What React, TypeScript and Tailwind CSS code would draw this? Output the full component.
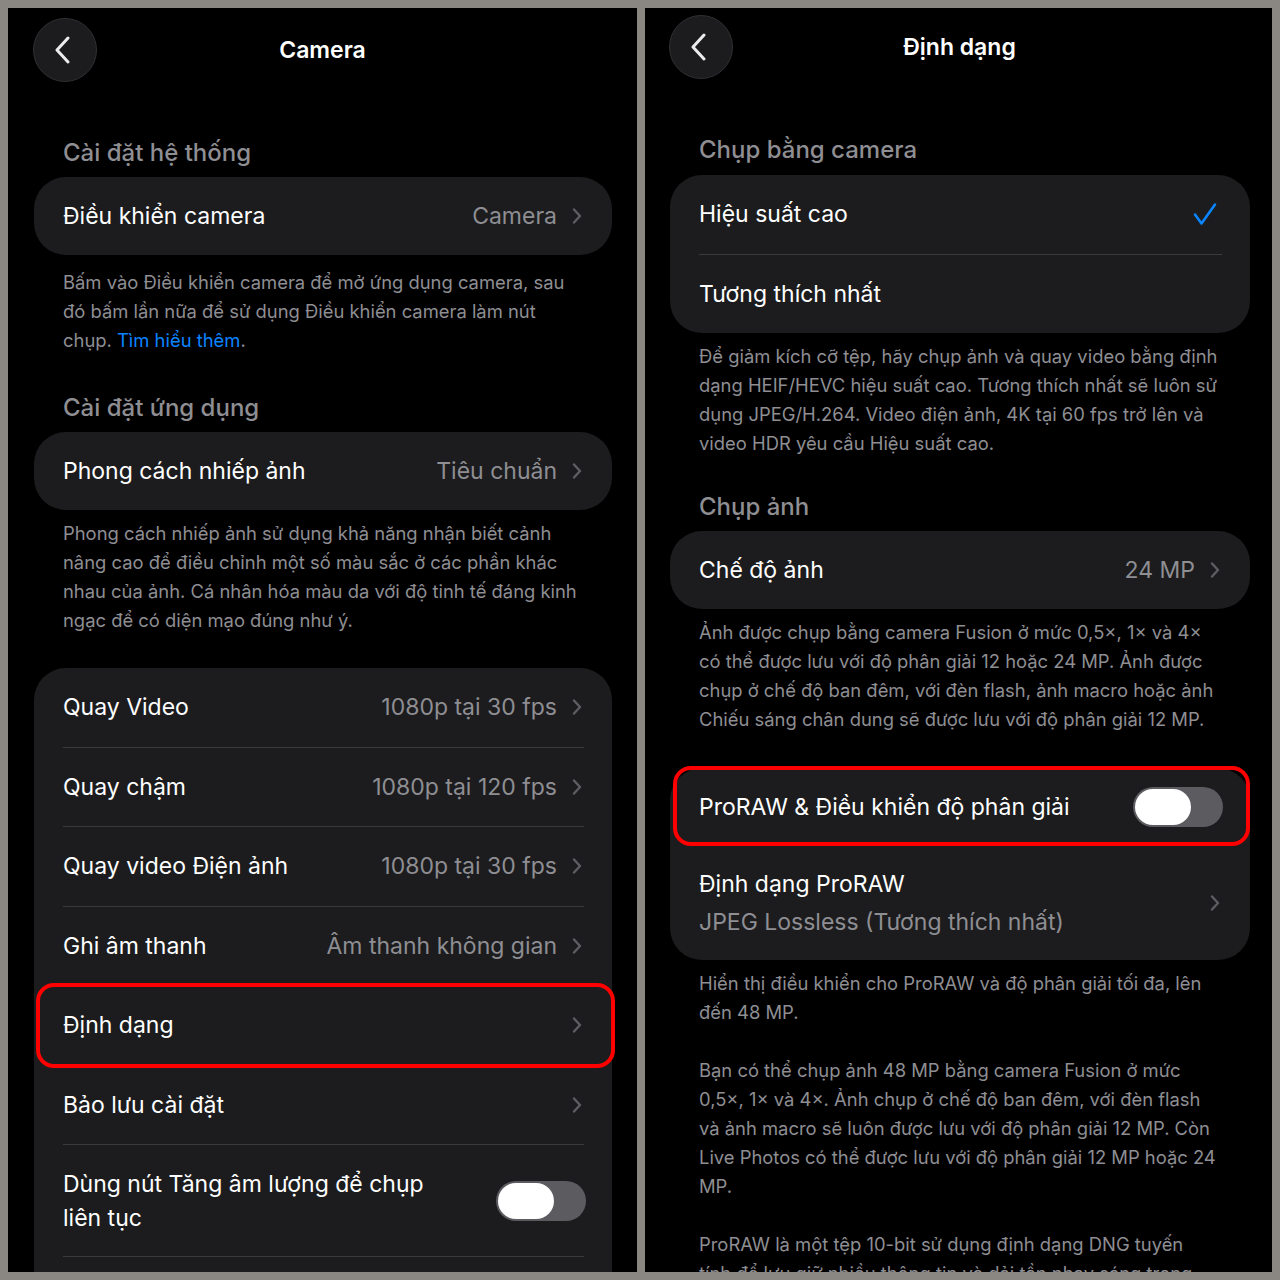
import React from "react";

const Chevron = () => (
  <svg width="10" height="16" viewBox="0 0 10 16" className="shrink-0">
    <path d="M2 1.5 L8 8 L2 14.5" fill="none" stroke="#5d5d62" strokeWidth="2.4" strokeLinecap="round" strokeLinejoin="round" />
  </svg>
);

const BackButton = () => (
  <div className="w-[64px] h-[64px] rounded-full bg-[#1c1c1e] border border-[#303033] flex items-center justify-center">
    <svg width="18" height="28" viewBox="0 0 18 28" className="-ml-[4px]">
      <path d="M14 2 L3 14 L14 26" fill="none" stroke="#ececec" strokeWidth="3" strokeLinecap="round" strokeLinejoin="round" />
    </svg>
  </div>
);

const Toggle = () => (
  <div className="w-[90px] h-[40px] rounded-full bg-[#5b5b60] p-[2px] flex items-center shrink-0">
    <div className="w-[56px] h-[36px] rounded-full bg-white" />
  </div>
);

const Sep = () => <div className="h-px bg-[#3a3a3c] ml-[29px] mr-[28px]" />;

const Row = ({ label, value, h = "h-[78px]", chevron = true }: { label: string; value?: string; h?: string; chevron?: boolean }) => (
  <div className={`flex items-center ${h} pl-[29px] pr-[30px]`}>
    <span className="text-[23px] text-white whitespace-nowrap">{label}</span>
    <span className="ml-auto text-[23px] text-[#8e8e93] whitespace-nowrap mr-[15px]">{value}</span>
    {chevron && <Chevron />}
  </div>
);

const Header = ({ children, cls }: { children: React.ReactNode; cls: string }) => (
  <div className={`pl-[29px] h-[30px] leading-[30px] text-[24px] font-medium text-[#8e8e93] ${cls}`}>{children}</div>
);

const Footer = ({ lines, cls }: { lines: React.ReactNode[]; cls: string }) => (
  <div className={`pl-[29px] text-[18.4px] leading-[29px] text-[#8e8e93] ${cls}`}>
    {lines.map((l, i) => (
      <div key={i} className="whitespace-nowrap">{l}</div>
    ))}
  </div>
);

const RedBox = ({ cls }: { cls: string }) => (
  <div className={`absolute border-[4px] border-[#ff0000] rounded-[18px] pointer-events-none ${cls}`} />
);

export default function App() {
  return (
    <div className="w-[1280px] h-[1280px] bg-[#8a8782] p-[8px] flex gap-[8px] font-['Inter','Noto_Sans',sans-serif] antialiased">
      {/* LEFT PANEL */}
      <div className="w-[629px] h-[1264px] bg-black overflow-hidden pl-[26px] pr-[25px]">
        <div className="mt-[10px] h-[64px] grid grid-cols-[64px_1fr_64px] items-center -ml-[1px]">
          <BackButton />
          <div className="text-center text-[23px] font-semibold text-white">Camera</div>
          <div />
        </div>

        <Header cls="mt-[56px]">Cài đặt hệ thống</Header>
        <div className="mt-[9px] bg-[#1c1c1e] rounded-[32px]">
          <Row label="Điều khiển camera" value="Camera" />
        </div>
        <Footer
          cls="mt-[13px]"
          lines={[
            "Bấm vào Điều khiển camera để mở ứng dụng camera, sau",
            "đó bấm lần nữa để sử dụng Điều khiển camera làm nút",
            <>
              chụp. <span className="text-[#0a84ff]">Tìm hiểu thêm</span>.
            </>,
          ]}
        />

        <Header cls="mt-[38px]">Cài đặt ứng dụng</Header>
        <div className="mt-[9px] bg-[#1c1c1e] rounded-[32px]">
          <Row label="Phong cách nhiếp ảnh" value="Tiêu chuẩn" />
        </div>
        <Footer
          cls="mt-[9px]"
          lines={[
            "Phong cách nhiếp ảnh sử dụng khả năng nhận biết cảnh",
            "nâng cao để điều chỉnh một số màu sắc ở các phần khác",
            "nhau của ảnh. Cá nhân hóa màu da với độ tinh tế đáng kinh",
            "ngạc để có diện mạo đúng như ý.",
          ]}
        />

        <div className="mt-[33px] bg-[#1c1c1e] rounded-t-[32px] pb-[60px]">
          <Row label="Quay Video" value="1080p tại 30 fps" h="h-[78.5px]" />
          <Sep />
          <Row label="Quay chậm" value="1080p tại 120 fps" h="h-[78.5px]" />
          <Sep />
          <Row label="Quay video Điện ảnh" value="1080p tại 30 fps" h="h-[78.5px]" />
          <Sep />
          <Row label="Ghi âm thanh" value="Âm thanh không gian" h="h-[78.5px]" />
          <Sep />
          <div className="relative">
            <Row label="Định dạng" h="h-[78.5px]" />
            <RedBox cls="left-[2px] -right-[3px] -top-[3px] -bottom-[3px]" />
          </div>
          <Sep />
          <Row label="Bảo lưu cài đặt" h="h-[78.5px]" />
          <Sep />
          <div className="flex items-center h-[111px] pl-[29px] pr-[26px]">
            <div className="text-[23px] leading-[34px] text-white">
              <div className="whitespace-nowrap">Dùng nút Tăng âm lượng để chụp</div>
              <div className="whitespace-nowrap">liên tục</div>
            </div>
            <div className="ml-auto">
              <Toggle />
            </div>
          </div>
          <Sep />
        </div>
      </div>

      {/* RIGHT PANEL */}
      <div className="w-[627px] h-[1264px] bg-black overflow-hidden pl-[25px] pr-[22px]">
        <div className="mt-[7px] h-[64px] grid grid-cols-[64px_1fr_64px] items-center -ml-[1px]">
          <BackButton />
          <div className="text-center text-[23px] font-semibold text-white">Định dạng</div>
          <div />
        </div>

        <Header cls="mt-[56px]">Chụp bằng camera</Header>
        <div className="mt-[10px] bg-[#1c1c1e] rounded-[32px]">
          <div className="flex items-center h-[78.5px] pl-[29px] pr-[33px]">
            <span className="text-[23px] text-white">Hiệu suất cao</span>
            <svg width="24" height="24" viewBox="0 0 24 24" className="ml-auto">
              <path d="M2 12.5 L8.5 21.5 L22 2.5" fill="none" stroke="#0a84ff" strokeWidth="2.6" strokeLinecap="round" strokeLinejoin="round" />
            </svg>
          </div>
          <Sep />
          <div className="flex items-center h-[78.5px] pl-[29px]">
            <span className="text-[23px] text-white">Tương thích nhất</span>
          </div>
        </div>
        <Footer
          cls="mt-[9px]"
          lines={[
            "Để giảm kích cỡ tệp, hãy chụp ảnh và quay video bằng định",
            "dạng HEIF/HEVC hiệu suất cao. Tương thích nhất sẽ luôn sử",
            "dụng JPEG/H.264. Video điện ảnh, 4K tại 60 fps trở lên và",
            "video HDR yêu cầu Hiệu suất cao.",
          ]}
        />

        <Header cls="mt-[34px]">Chụp ảnh</Header>
        <div className="mt-[9px] bg-[#1c1c1e] rounded-[32px]">
          <Row label="Chế độ ảnh" value="24 MP" />
        </div>
        <Footer
          cls="mt-[9px]"
          lines={[
            "Ảnh được chụp bằng camera Fusion ở mức 0,5×, 1× và 4×",
            "có thể được lưu với độ phân giải 12 hoặc 24 MP. Ảnh được",
            "chụp ở chế độ ban đêm, với đèn flash, ảnh macro hoặc ảnh",
            "Chiếu sáng chân dung sẽ được lưu với độ phân giải 12 MP.",
          ]}
        />

        <div className="mt-[34px] bg-[#1c1c1e] rounded-[32px]">
          <div className="relative">
            <div className="flex items-center h-[78px] pl-[29px] pr-[27px]">
              <span className="text-[23px] text-white whitespace-nowrap">ProRAW &amp; Điều khiển độ phân giải</span>
              <div className="ml-auto">
                <Toggle />
              </div>
            </div>
            <RedBox cls="left-[3px] right-0 -top-[2px] bottom-0" />
          </div>
          <div className="flex items-center h-[114px] pl-[29px] pr-[30px]">
            <div className="text-[23px] leading-[38px]">
              <div className="text-white whitespace-nowrap">Định dạng ProRAW</div>
              <div className="text-[#8e8e93] whitespace-nowrap">JPEG Lossless (Tương thích nhất)</div>
            </div>
            <div className="ml-auto">
              <Chevron />
            </div>
          </div>
        </div>
        <Footer
          cls="mt-[9px]"
          lines={[
            "Hiển thị điều khiển cho ProRAW và độ phân giải tối đa, lên",
            "đến 48 MP.",
          ]}
        />
        <Footer
          cls="mt-[29px]"
          lines={[
            "Bạn có thể chụp ảnh 48 MP bằng camera Fusion ở mức",
            "0,5×, 1× và 4×. Ảnh chụp ở chế độ ban đêm, với đèn flash",
            "và ảnh macro sẽ luôn được lưu với độ phân giải 12 MP. Còn",
            "Live Photos có thể được lưu với độ phân giải 12 MP hoặc 24",
            "MP.",
          ]}
        />
        <Footer
          cls="mt-[29px]"
          lines={[
            "ProRAW là một tệp 10-bit sử dụng định dạng DNG tuyến",
            "tính để lưu giữ nhiều thông tin và dải tần nhạy sáng trong",
          ]}
        />
      </div>
    </div>
  );
}
